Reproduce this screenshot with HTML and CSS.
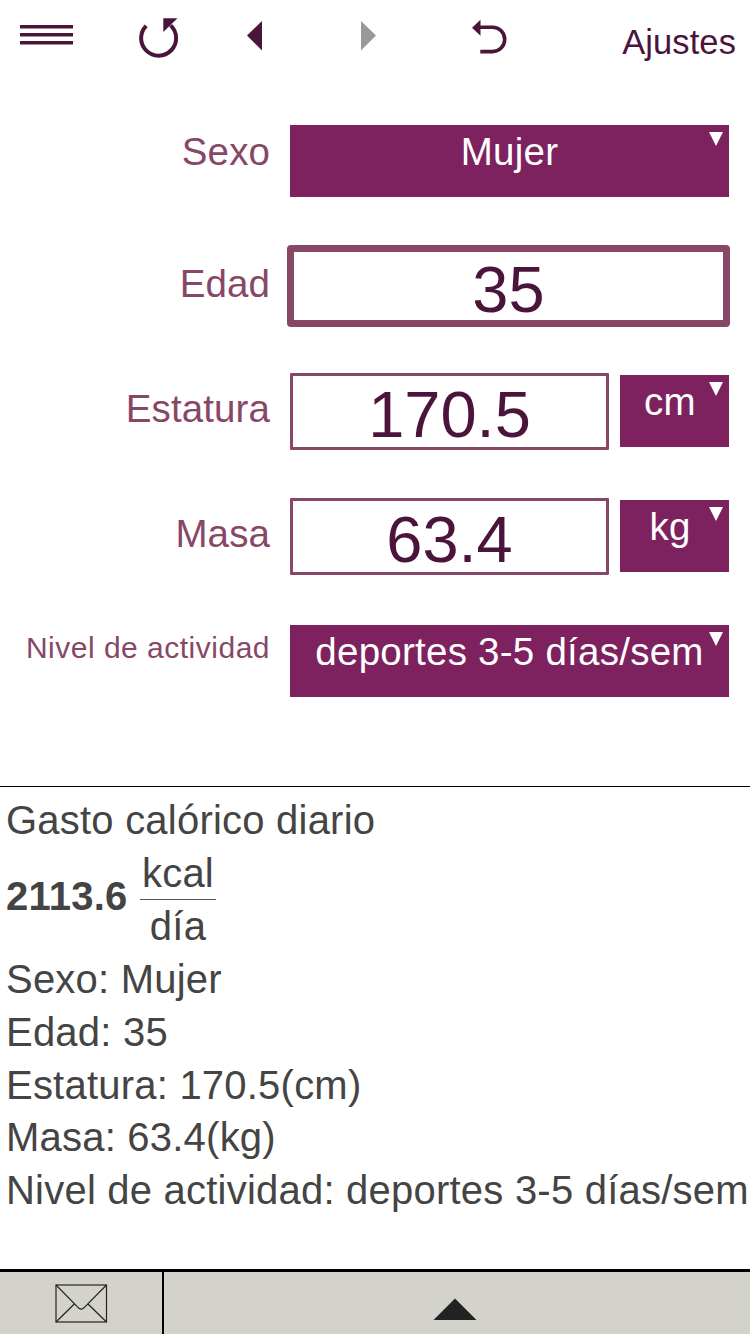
FILE: index.html
```html
<!DOCTYPE html>
<html lang="es">
<head>
    <meta charset="UTF-8">
    <meta name="viewport" content="width=device-width, initial-scale=1.0">
    <title>Gasto calórico diario</title>
    <link rel="stylesheet" href="styles.css">
</head>
<body>
    <header class="toolbar">
        <svg class="icon" width="100" height="80" viewBox="0 0 100 80">
            <path d="M20 26.7H73M20 34.7H73M20 42.7H73" stroke="#4b143b" stroke-width="3.4"/>
        </svg>
        <svg class="icon" width="110" height="80" viewBox="100 0 110 80">
            <path d="M146.2 25.8A17.5 17.5 0 1 0 170.6 25.4" fill="none" stroke="#4b143b" stroke-width="4"/>
            <path d="M163.3 18.3H177.5L163.3 32Z" fill="#4b143b"/>
        </svg>
        <svg class="icon" width="100" height="80" viewBox="210 0 100 80">
            <path d="M247 35.5L262 21V50.5Z" fill="#4b143b"/>
        </svg>
        <svg class="icon" width="120" height="80" viewBox="310 0 120 80">
            <path d="M376 35.5L361 21V50.5Z" fill="#999"/>
        </svg>
        <svg class="icon" width="120" height="80" viewBox="430 0 120 80">
            <path d="M479 27.2H492.5A12.2 12.2 0 0 1 492.5 51.6H480.3" fill="none" stroke="#4b143b" stroke-width="3.6"/>
            <path d="M472 27.8L480.5 19.8V35.8Z" fill="#4b143b"/>
        </svg>
        <a class="settings">Ajustes</a>
    </header>

    <main class="form">
        <div class="row">
            <label class="label label-top">Sexo</label>
            <div class="select">Mujer<span class="arrow"></span></div>
        </div>
        <div class="row">
            <label class="label">Edad</label>
            <div class="input active">35</div>
        </div>
        <div class="row">
            <label class="label">Estatura</label>
            <div class="input">170.5</div>
            <div class="select unit">cm<span class="arrow"></span></div>
        </div>
        <div class="row">
            <label class="label">Masa</label>
            <div class="input">63.4</div>
            <div class="select unit">kg<span class="arrow"></span></div>
        </div>
        <div class="row">
            <label class="label label-small">Nivel de actividad</label>
            <div class="select">deportes 3-5 días/sem<span class="arrow"></span></div>
        </div>
    </main>

    <section class="result">
        <p>Gasto calórico diario</p>
        <div class="value">
            <b>2113.6</b>
            <div class="fraction">
                <span class="top">kcal</span>
                <span class="bottom">día</span>
            </div>
        </div>
        <p>Sexo: Mujer</p>
        <p>Edad: 35</p>
        <p>Estatura: 170.5(cm)</p>
        <p>Masa: 63.4(kg)</p>
        <p>Nivel de actividad: deportes 3-5 días/sem</p>
    </section>

    <footer class="bottombar">
        <div class="mail">
            <svg width="53" height="40" viewBox="0 0 53 40" fill="none" stroke="#222" stroke-width="1.2">
                <rect x="1" y="1" width="50.5" height="37"/>
                <path d="M1 1L24 24.3Q26.2 26 28.4 24.3L51.5 1M1 38L19.3 20M51.5 38L33 20"/>
            </svg>
        </div>
        <div class="expand">
            <svg width="44" height="22" viewBox="0 0 44 22"><path d="M0.5 22L22 0.5L43.5 22Z" fill="#222"/></svg>
        </div>
    </footer>
</body>
</html>
```
FILE: styles.css
```css
*{
    margin: 0;
    padding: 0;
    box-sizing: border-box;
}
body{
    width: 750px;
    height: 1334px;
    overflow: hidden;
    display: flex;
    flex-direction: column;
    background-color: #fff;
    font-family: "Liberation Sans", Arial, sans-serif;
}

.toolbar{
    display: flex;
    height: 125px;
    flex: none;
}
.icon{
    flex: none;
}
.settings{
    flex: 1;
    padding-right: 14px;
    text-align: right;
    font-size: 34.5px;
    line-height: 84px;
    letter-spacing: 0.1px;
    color: #4b143b;
}

.form{
    display: flex;
    flex-direction: column;
    gap: 53px;
    height: 661px;
    flex: none;
}
.row{
    display: flex;
    height: 72px;
    padding-right: 21px;
}
.label{
    width: 270px;
    margin-right: 20px;
    flex: none;
    text-align: right;
    font-size: 38.5px;
    line-height: 67px;
    letter-spacing: 0.1px;
    color: #874767;
}
.label-top{
    line-height: 53px;
}
.label-small{
    font-size: 30px;
    line-height: 45px;
    letter-spacing: 0.5px;
}
.select{
    position: relative;
    flex: 1;
    height: 72px;
    background-color: #7d225f;
    color: #fff;
    text-align: center;
    font-size: 38.5px;
    line-height: 53px;
    letter-spacing: 0.25px;
}
.unit{
    flex: none;
    width: 109px;
    margin-left: 11px;
    padding-right: 9px;
}
.arrow{
    position: absolute;
    top: 7px;
    right: 6px;
    border-left: 7.5px solid transparent;
    border-right: 7.5px solid transparent;
    border-top: 14px solid #fff;
}
.input{
    flex: 1;
    height: 77px;
    margin-top: -2px;
    border: 3px solid #874767;
    border-radius: 1px;
    text-align: center;
    font-size: 65px;
    line-height: 78px;
    color: #4b143b;
}
.active{
    height: 82px;
    margin: -5px -1px 0 -3px;
    border-width: 7px;
    border-radius: 4px;
    line-height: 76px;
}

.result{
    flex: 1;
    padding: 7.4px 0 0 6px;
    border-top: 1px solid #000;
    font-size: 40px;
    line-height: 52.7px;
    letter-spacing: 0.22px;
    color: #444;
    white-space: nowrap;
}
.value{
    display: flex;
    height: 106px;
}
.value b{
    line-height: 98px;
}
.fraction{
    width: 76px;
    margin-left: 13px;
    padding-top: 0.3px;
    text-align: center;
}
.fraction span{
    display: block;
    height: 53px;
}
.fraction .top{
    border-bottom: 1.5px solid #555;
}
.fraction .top,
.fraction .bottom{
    padding-right: 1px;
}

.bottombar{
    display: flex;
    flex: none;
    height: 65px;
    border-top: 3px solid #000;
    background-color: #d4d3cb;
}
.mail{
    width: 164px;
    padding: 12px 0 0 55px;
    border-right: 2px solid #000;
}
.expand{
    flex: 1;
    padding: 26px 0 0 269px;
}
.bottombar svg{
    display: block;
}
```
